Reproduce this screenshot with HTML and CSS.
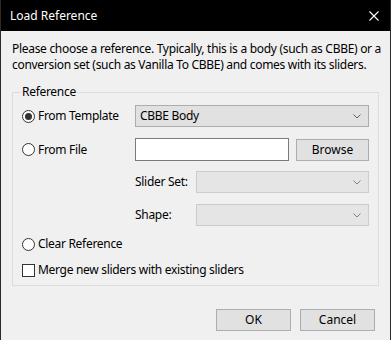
FILE: index.html
```html
<!DOCTYPE html>
<html lang="en">
<head>
  <meta charset="UTF-8" />
  <title>Load Reference</title>
  <link rel="stylesheet" href="styles.css">
</head>
<body>

<div class="window">
  <div class="titlebar">
    <span class="title">Load Reference</span>
    <svg class="close" width="10" height="10" viewBox="0 0 10 10">
      <path d="M0.5 0.5 L9.5 9.5 M9.5 0.5 L0.5 9.5" stroke="#fff" stroke-width="1.1" fill="none"/>
    </svg>
  </div>

  <div class="content">
    <p class="intro">Please choose a reference. Typically, this is a body (such as CBBE) or a<br>conversion set (such as Vanilla To CBBE) and comes with its sliders.</p>

    <fieldset class="group">
      <legend>Reference</legend>

      <div class="row row-template">
        <label class="option"><span class="radio checked"></span>From Template</label>
        <div class="combo">
          <span>CBBE Body</span>
          <svg class="chevron" width="8" height="5" viewBox="0 0 8 5"><path d="M0.5 0.5 L4 4 L7.5 0.5" stroke="#606060" fill="none"/></svg>
        </div>
      </div>

      <div class="row row-file">
        <label class="option"><span class="radio"></span>From File</label>
        <div class="file-input"></div>
        <button class="btn browse">Browse</button>
      </div>

      <div class="row row-sub row-slider">
        <span class="sub-label">Slider Set:</span>
        <div class="combo disabled">
          <span></span>
          <svg class="chevron" width="8" height="5" viewBox="0 0 8 5"><path d="M0.5 0.5 L4 4 L7.5 0.5" stroke="#808080" fill="none"/></svg>
        </div>
      </div>

      <div class="row row-sub row-shape">
        <span class="sub-label">Shape:</span>
        <div class="combo disabled">
          <span></span>
          <svg class="chevron" width="8" height="5" viewBox="0 0 8 5"><path d="M0.5 0.5 L4 4 L7.5 0.5" stroke="#808080" fill="none"/></svg>
        </div>
      </div>

      <div class="row row-clear">
        <label class="option"><span class="radio"></span>Clear Reference</label>
      </div>

      <div class="row row-merge">
        <label class="option"><span class="checkbox"></span>Merge new sliders with existing sliders</label>
      </div>
    </fieldset>

    <div class="actions">
      <button class="btn">OK</button>
      <button class="btn">Cancel</button>
    </div>
  </div>
</div>

</body>
</html>
```

FILE: styles.css
```css
* {
  margin: 0;
  padding: 0;
  box-sizing: border-box;
}

body {
  width: 391px;
  height: 340px;
  overflow: hidden;
  font-family: 'Noto Sans', 'Liberation Sans', sans-serif;
  font-size: 12px;
  line-height: 16px;
  letter-spacing: -0.3px;
  color: #000;
  background: #f0f0f0;
}

.window {
  height: 340px;
  background: #f0f0f0;
  border-left: 1px solid #2b2b2b;
  border-right: 1px solid #2b2b2b;
}

/* Title bar */
.titlebar {
  height: 31px;
  background: #000;
  color: #fff;
  display: flex;
  align-items: center;
  justify-content: space-between;
  padding: 0 10px 0 9px;
}

.title {
  font-size: 12px;
  letter-spacing: 0;
}

.close {
  display: block;
  margin-right: 1px;
}

.content {
  padding: 0 11px;
}

.intro {
  margin-top: 10px;
  white-space: nowrap;
}

/* Group box */
.group {
  margin-top: 11px;
  border: 1px solid #dcdcdc;
  padding: 0 9px 7px 9px;
  display: flex;
  flex-direction: column;
}

.group legend {
  padding: 0 1px;
  margin-left: -1px;
}

.row {
  display: flex;
  align-items: center;
}

.row-template { margin-top: 5px; height: 22px; }
.row-file { margin-top: 11px; height: 23px; }
.row-slider { margin-top: 10px; height: 22px; }
.row-shape { margin-top: 11px; height: 22px; }
.row-clear { margin-top: 10px; height: 16px; }
.row-merge { margin-top: 10px; height: 16px; }

.option {
  width: 113px;
  flex: none;
  display: flex;
  align-items: center;
  gap: 3px;
  white-space: nowrap;
}

.row-merge .option {
  width: auto;
}

.radio {
  width: 13px;
  height: 13px;
  border: 1px solid #333;
  border-radius: 50%;
  background: #fff;
  display: flex;
  align-items: center;
  justify-content: center;
  flex: none;
}

.radio.checked::after {
  content: "";
  width: 7px;
  height: 7px;
  border-radius: 50%;
  background: #333;
}

.checkbox {
  width: 13px;
  height: 13px;
  border: 1px solid #333;
  background: #fff;
  flex: none;
}

/* Controls */
.combo {
  flex: 1;
  height: 22px;
  background: #e1e1e1;
  border: 1px solid #adadad;
  display: flex;
  align-items: center;
  justify-content: space-between;
  padding: 0 7px 0 4px;
}

.combo.disabled {
  background: #e5e5e5;
  border-color: #cccccc;
}

.chevron {
  display: block;
}

.file-input {
  width: 154px;
  height: 23px;
  background: #fff;
  border: 1px solid #7a7a7a;
}

.btn {
  font: inherit;
  color: #000;
  background: #e1e1e1;
  border: 1px solid #adadad;
  height: 22px;
  width: 75px;
}

.browse {
  margin-left: auto;
  width: 73px;
  height: 22px;
}

.sub-label {
  width: 61px;
  flex: none;
}

.row-sub {
  padding-left: 113px;
}

/* Bottom buttons */
.actions {
  margin-top: 23px;
  display: flex;
  justify-content: flex-end;
  gap: 9px;
  padding-right: 4px;
}
```
